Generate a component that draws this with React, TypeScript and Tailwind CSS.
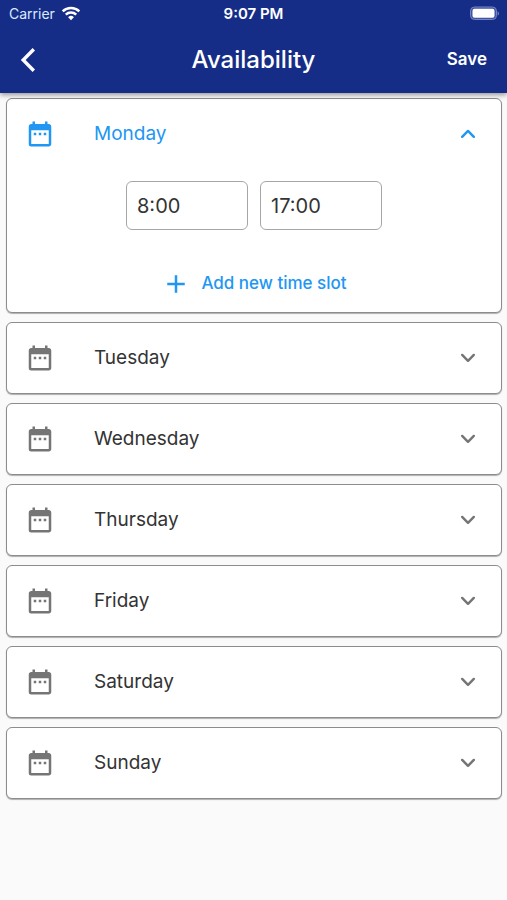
import { useState } from 'react';
import { MdAdd, MdDateRange } from 'react-icons/md';

const days = ['Monday', 'Tuesday', 'Wednesday', 'Thursday', 'Friday', 'Saturday', 'Sunday'];

function StatusBar() {
  return (
    <div className="grid grid-cols-3 items-center h-7 px-2 text-sm">
      <div className="flex items-center gap-1.5 pl-px text-blue-100">
        <span>Carrier</span>
        <svg className="w-5 h-4" viewBox="0 0 20 16" fill="none" stroke="white" strokeWidth="2.5">
          <path d="M1.7 5.4a11.8 11.8 0 0 1 16.6 0" />
          <path d="M4.8 8.7a7.4 7.4 0 0 1 10.4 0" />
          <path d="M10 14.2l-2.9-3a4.2 4.2 0 0 1 5.8 0z" fill="white" stroke="none" />
        </svg>
      </div>
      <span className="text-center text-[15px] font-semibold">9:07 PM</span>
      <svg className="w-[30px] h-4 justify-self-end" viewBox="0 0 30 16">
        <rect x="1.5" y="1" width="26" height="12.5" rx="4" fill="#3f52a3" stroke="#7684c0" />
        <rect x="3.5" y="2.8" width="22" height="9" rx="2" fill="white" />
        <path d="M28.6 5.2c1.8.8 1.8 3.6 0 4.4z" fill="#7684c0" />
      </svg>
    </div>
  );
}

function Header() {
  return (
    <header className="relative bg-[#162d88] text-white shadow-[0_2px_5px_rgba(0,0,0,0.4)]">
      <StatusBar />
      <div className="grid grid-cols-[1fr_auto_1fr] items-center h-[65px] px-5 pb-0.5">
        <button type="button" aria-label="Back" className="justify-self-start">
          <svg className="w-4 h-6" viewBox="0 0 16 24" fill="none" stroke="white" strokeWidth="3.4">
            <path d="M13.8 1.2L3.2 12L13.8 22.8" />
          </svg>
        </button>
        <h1 className="text-2xl font-medium">Availability</h1>
        <button type="button" className="justify-self-end text-[17px] font-semibold">
          Save
        </button>
      </div>
    </header>
  );
}

function TimeSlots() {
  return (
    <div className="flex flex-col items-center pt-3">
      <div className="flex gap-3">
        <input
          aria-label="Start time"
          defaultValue="8:00"
          className="w-[122px] h-[49px] px-2.5 text-xl border border-[#a6a6a6] rounded-md outline-none"
        />
        <input
          aria-label="End time"
          defaultValue="17:00"
          className="w-[122px] h-[49px] px-2.5 text-xl border border-[#a6a6a6] rounded-md outline-none"
        />
      </div>
      <button type="button" className="flex items-center gap-2.5 h-12 mt-[30px] mb-1 text-[17px] font-medium text-[#2196f3]">
        <MdAdd className="w-[30px] h-[30px]" />
        Add new time slot
      </button>
    </div>
  );
}

function Chevron({ up }: { up: boolean }) {
  return (
    <svg
      className="w-7 h-7"
      viewBox="0 0 24 24"
      fill="none"
      stroke="currentColor"
      strokeWidth="2.1"
      strokeLinecap="round"
      strokeLinejoin="round"
    >
      <path d={up ? 'M7 14.4l5-5 5 5' : 'M7 9.4l5 5 5-5'} />
    </svg>
  );
}

type DayCardProps = {
  day: string;
  open: boolean;
  onToggle: () => void;
};

function DayCard({ day, open, onToggle }: DayCardProps) {
  return (
    <section className="bg-white border border-[#8c8c8c] rounded-md shadow-[0_1px_1px_rgba(0,0,0,0.3)]">
      <button
        type="button"
        aria-expanded={open}
        onClick={onToggle}
        className={`flex items-center w-full h-[70px] pl-[18px] pr-[19px] text-[19px] ${open ? 'text-[#2196f3]' : 'text-[#757575]'}`}
      >
        <MdDateRange className="w-[30px] h-[30px]" />
        <span className={`flex-1 pl-[39px] text-left ${open ? '' : 'text-[#333333]'}`}>{day}</span>
        <Chevron up={open} />
      </button>
      {open && <TimeSlots />}
    </section>
  );
}

export default function App() {
  const [openDay, setOpenDay] = useState('Monday');

  return (
    <div className="min-h-screen bg-[#fafafa] text-[#333333] font-['Inter','Liberation_Sans',sans-serif]">
      <Header />
      <main className="flex flex-col gap-[9px] pl-1.5 pr-[5px] pt-[5px] pb-6">
        {days.map((day) => (
          <DayCard key={day} day={day} open={openDay === day} onToggle={() => setOpenDay(openDay === day ? '' : day)} />
        ))}
      </main>
    </div>
  );
}
